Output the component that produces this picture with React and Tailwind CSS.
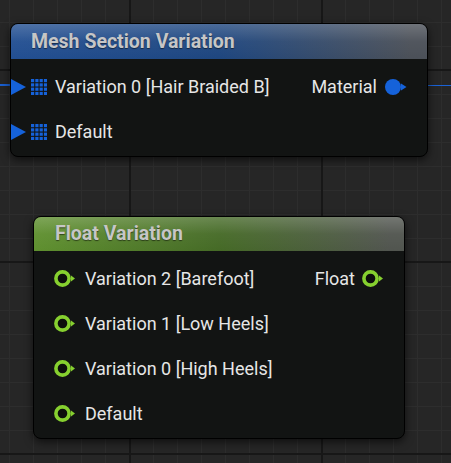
import React from "react";

function GridPin() {
  return (
    <svg width="16" height="16" viewBox="0 0 16 16" className="shrink-0">
      {[0, 1, 2, 3].map((r) =>
        [0, 1, 2, 3].map((c) => (
          <rect key={`${r}-${c}`} x={c * 4.3} y={r * 4.3} width="3.2" height="3.2" fill="#1562da" />
        ))
      )}
    </svg>
  );
}

function WireArrow() {
  return (
    <svg width="15" height="16" viewBox="0 0 15 16" className="shrink-0">
      <polygon points="0,0 15,8 0,16" fill="#1562da" />
    </svg>
  );
}

function BluePinOut() {
  return (
    <svg width="22" height="16" viewBox="0 0 22 16" className="shrink-0">
      <circle cx="8" cy="8" r="8" fill="#1562da" />
      <polygon points="16,4.5 21.5,8 16,11.5" fill="#1562da" />
    </svg>
  );
}

function GreenPin() {
  return (
    <svg width="21" height="17" viewBox="0 0 21 17" className="shrink-0">
      <circle cx="8.5" cy="8.5" r="6.6" fill="#0d0f0c" stroke="#86d02f" strokeWidth="3.6" />
      <polygon points="17,5.5 21,8.5 17,11.5" fill="#86d02f" />
    </svg>
  );
}

function Node({ title, header, className, titlePad, children }) {
  return (
    <div
      className={`absolute flex flex-col overflow-hidden rounded-[8px] border border-black bg-[#121413] shadow-[0_3px_8px_rgba(0,0,0,0.6)] ${className}`}
    >
      <div className={`relative flex h-[34px] shrink-0 items-center ${header} ${titlePad}`}>
        <div className="absolute inset-0 bg-[linear-gradient(to_bottom,rgba(255,255,255,0.2),rgba(255,255,255,0.04)_50%,transparent)]" />
        <span className="relative text-[19.5px] font-bold leading-none text-[#c6c6c6] [text-shadow:0_1px_1px_rgba(0,0,0,0.5)]">
          {title}
        </span>
      </div>
      <div className="flex flex-col pt-[5px]">{children}</div>
    </div>
  );
}

export default function App() {
  return (
    <div className="relative h-[463px] w-[451px] overflow-hidden bg-[#262626] font-[Roboto,sans-serif] [background-image:linear-gradient(to_right,#171717_2px,transparent_2px),linear-gradient(to_bottom,#171717_2px,transparent_2px),linear-gradient(to_right,#2d2d2d_1px,transparent_1px),linear-gradient(to_bottom,#2d2d2d_1px,transparent_1px)] [background-size:192px_100%,100%_192px,24px_100%,100%_24px] [background-position:129px_0,0_69px,9px_0,0_22px]">
      {/* wires */}
      <div className="absolute left-0 top-[84px] h-[2px] w-[12px] bg-[#1a5fd0]" />
      <div className="absolute left-[407px] top-[84.5px] h-[1.5px] w-[44px] bg-[linear-gradient(to_right,#12356e_0,#12356e_21px,#1a62d6_21px)]" />

      <Node
        title="Mesh Section Variation"
        className="left-[10px] top-[23px] h-[134px] w-[418px]"
        header="h-[35px] bg-[linear-gradient(to_right,#224f92,#1e467f_50%,#4b5058_96%)]"
        titlePad="pl-[20px]"
      >
        <div className="flex h-[45px] items-center justify-between pr-[20px] text-[18px] leading-none text-[#e6e6e6]">
          <div className="flex items-center">
            <WireArrow />
            <span className="ml-[5px]"><GridPin /></span>
            <span className="ml-[8px]">Variation 0 [Hair Braided B]</span>
          </div>
          <div className="flex items-center gap-[8px]">
            <span>Material</span>
            <BluePinOut />
          </div>
        </div>
        <div className="flex h-[45px] items-center text-[18px] leading-none text-[#e6e6e6]">
          <WireArrow />
          <span className="ml-[5px]"><GridPin /></span>
          <span className="ml-[8px]">Default</span>
        </div>
      </Node>

      <Node
        title="Float Variation"
        className="left-[33px] top-[216px] h-[223px] w-[372px]"
        header="bg-[linear-gradient(to_right,#5f902f,#456a26_50%,#51554f_96%)]"
        titlePad="pl-[21px]"
      >
        {[
          "Variation 2 [Barefoot]",
          "Variation 1 [Low Heels]",
          "Variation 0 [High Heels]",
          "Default",
        ].map((label, i) => (
          <div
            key={label}
            className="flex h-[45px] items-center justify-between pl-[20px] pr-[21px] text-[18px] leading-none text-[#e6e6e6]"
          >
            <div className="flex items-center gap-[10px]">
              <GreenPin />
              <span>{label}</span>
            </div>
            {i === 0 && (
              <div className="flex items-center gap-[7px]">
                <span>Float</span>
                <GreenPin />
              </div>
            )}
          </div>
        ))}
      </Node>
    </div>
  );
}
